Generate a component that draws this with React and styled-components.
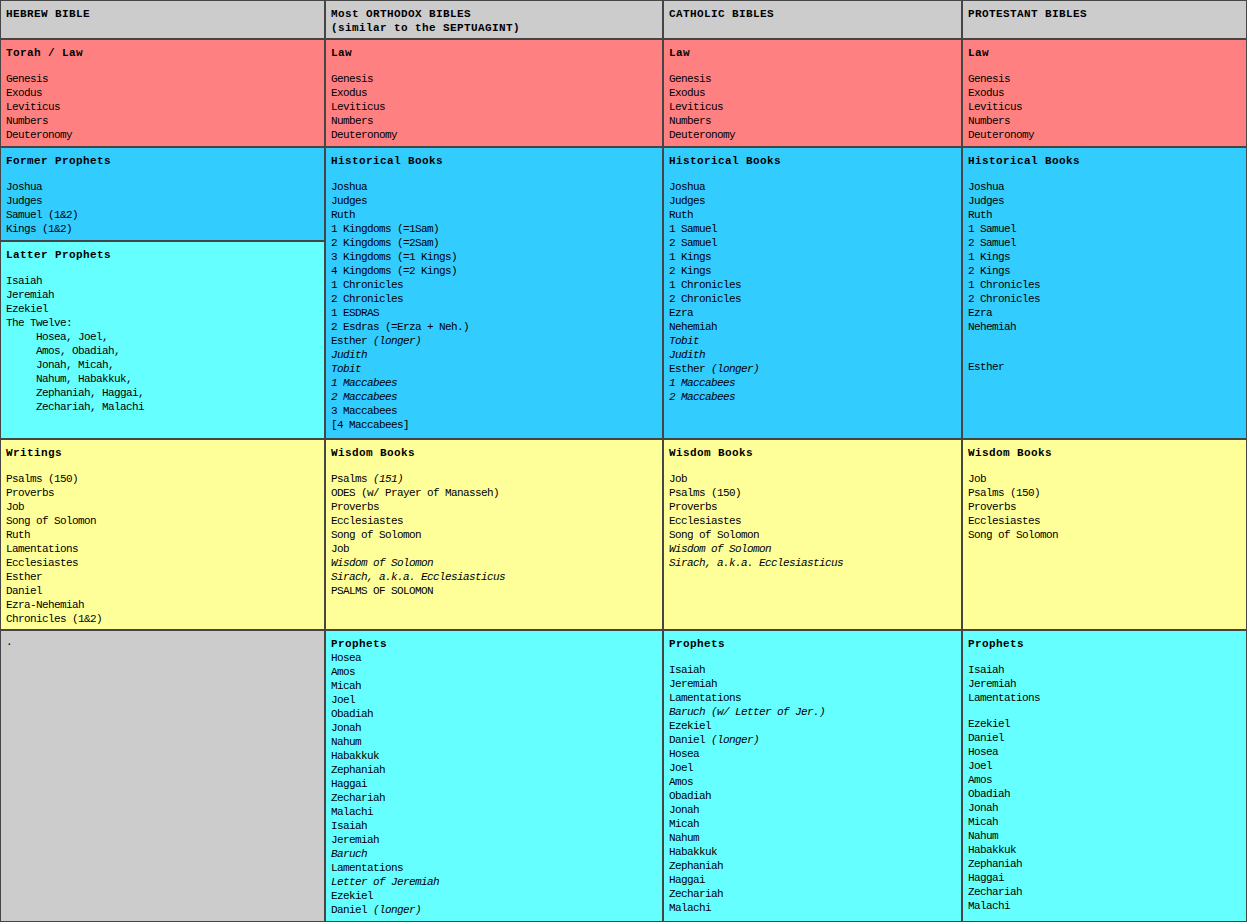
import React from 'react'
import styled, { createGlobalStyle } from 'styled-components'

const GlobalStyle = createGlobalStyle`
  html, body { margin: 0; padding: 0; background: #ffffff; }
  body { font-family: "Liberation Mono", "DejaVu Sans Mono", monospace; }
`

const GRAY = '#cccccc'
const RED = '#ff8080'
const BLUE = '#33ccff'
const CYAN = '#66ffff'
const YELLOW = '#ffff99'

const Grid = styled.div`
  display: grid;
  width: 1247px;
  grid-template-columns: 325px 338px 299px 285px;
  grid-template-rows: 39px 108px 94px 198px 191px 292px;
`

const Cell = styled.div`
  box-sizing: border-box;
  grid-row: ${(p) => p.$row};
  background: ${(p) => p.$bg};
  border: 1px solid #454545;
  padding: ${(p) => (p.$head ? '6px 5px 4px' : '4px 5px')};
  overflow: hidden;
  color: #000;
  font-size: 11px;
  line-height: 14px;
  letter-spacing: -0.6px;
  white-space: pre;
`

const HeadText = styled.div`
  font-weight: bold;
  letter-spacing: 0.4px;
`

const Heading = styled(HeadText)`
  padding-top: 2px;
`

const Line = styled.div`
  height: 14px;
  padding-left: ${(p) => (p.$indent ? '30px' : '0')};
`

const Blank = styled.div`
  height: ${(p) => p.$h || 14}px;
`

const Em = styled.i`
  font-style: italic;
`

// a line is a string, ['text', 'italic'] pair, {indent} or {blank: n}
const header = [
  ['HEBREW BIBLE'],
  ['Most ORTHODOX BIBLES', '(similar to the SEPTUAGINT)'],
  ['CATHOLIC BIBLES'],
  ['PROTESTANT BIBLES'],
]

const law = ['Genesis', 'Exodus', 'Leviticus', 'Numbers', 'Deuteronomy']

const lawCells = [
  { h: 'Torah / Law', gap: true, items: law },
  { h: 'Law', gap: true, items: law },
  { h: 'Law', gap: true, items: law },
  { h: 'Law', gap: true, items: law },
]

const histCells = [
  {
    row: '3',
    bg: BLUE,
    h: 'Former Prophets',
    gap: true,
    items: ['Joshua', 'Judges', 'Samuel (1&2)', 'Kings (1&2)'],
  },
  {
    row: '4',
    bg: CYAN,
    h: 'Latter Prophets',
    gap: true,
    items: [
      'Isaiah',
      'Jeremiah',
      'Ezekiel',
      'The Twelve:',
      { indent: 'Hosea, Joel,' },
      { indent: 'Amos, Obadiah,' },
      { indent: 'Jonah, Micah,' },
      { indent: 'Nahum, Habakkuk,' },
      { indent: 'Zephaniah, Haggai,' },
      { indent: 'Zechariah, Malachi' },
    ],
  },
  {
    row: '3 / 5',
    bg: BLUE,
    h: 'Historical Books',
    gap: true,
    items: [
      'Joshua',
      'Judges',
      'Ruth',
      '1 Kingdoms (=1Sam)',
      '2 Kingdoms (=2Sam)',
      '3 Kingdoms (=1 Kings)',
      '4 Kingdoms (=2 Kings)',
      '1 Chronicles',
      '2 Chronicles',
      '1 ESDRAS',
      '2 Esdras (=Erza + Neh.)',
      ['Esther ', '(longer)'],
      ['', 'Judith'],
      ['', 'Tobit'],
      ['', '1 Maccabees'],
      ['', '2 Maccabees'],
      '3 Maccabees',
      '[4 Maccabees]',
    ],
  },
  {
    row: '3 / 5',
    bg: BLUE,
    h: 'Historical Books',
    gap: true,
    items: [
      'Joshua',
      'Judges',
      'Ruth',
      '1 Samuel',
      '2 Samuel',
      '1 Kings',
      '2 Kings',
      '1 Chronicles',
      '2 Chronicles',
      'Ezra',
      'Nehemiah',
      ['', 'Tobit'],
      ['', 'Judith'],
      ['Esther ', '(longer)'],
      ['', '1 Maccabees'],
      ['', '2 Maccabees'],
    ],
  },
  {
    row: '3 / 5',
    bg: BLUE,
    h: 'Historical Books',
    gap: true,
    items: [
      'Joshua',
      'Judges',
      'Ruth',
      '1 Samuel',
      '2 Samuel',
      '1 Kings',
      '2 Kings',
      '1 Chronicles',
      '2 Chronicles',
      'Ezra',
      'Nehemiah',
      { blank: 14 },
      { blank: 12 },
      'Esther',
    ],
  },
]

const wisdomCells = [
  {
    h: 'Writings',
    gap: true,
    items: [
      'Psalms (150)',
      'Proverbs',
      'Job',
      'Song of Solomon',
      'Ruth',
      'Lamentations',
      'Ecclesiastes',
      'Esther',
      'Daniel',
      'Ezra-Nehemiah',
      'Chronicles (1&2)',
    ],
  },
  {
    h: 'Wisdom Books',
    gap: true,
    items: [
      ['Psalms ', '(151)'],
      'ODES (w/ Prayer of Manasseh)',
      'Proverbs',
      'Ecclesiastes',
      'Song of Solomon',
      'Job',
      ['', 'Wisdom of Solomon'],
      ['', 'Sirach, a.k.a. Ecclesiasticus'],
      'PSALMS OF SOLOMON',
    ],
  },
  {
    h: 'Wisdom Books',
    gap: true,
    items: [
      'Job',
      'Psalms (150)',
      'Proverbs',
      'Ecclesiastes',
      'Song of Solomon',
      ['', 'Wisdom of Solomon'],
      ['', 'Sirach, a.k.a. Ecclesiasticus'],
    ],
  },
  {
    h: 'Wisdom Books',
    gap: true,
    items: ['Job', 'Psalms (150)', 'Proverbs', 'Ecclesiastes', 'Song of Solomon'],
  },
]

const minor = [
  'Hosea',
  'Joel',
  'Amos',
  'Obadiah',
  'Jonah',
  'Micah',
  'Nahum',
  'Habakkuk',
  'Zephaniah',
  'Haggai',
  'Zechariah',
  'Malachi',
]

const prophetCells = [
  { bg: GRAY, items: ['.'] },
  {
    bg: CYAN,
    h: 'Prophets',
    items: [
      'Hosea',
      'Amos',
      'Micah',
      'Joel',
      'Obadiah',
      'Jonah',
      'Nahum',
      'Habakkuk',
      'Zephaniah',
      'Haggai',
      'Zechariah',
      'Malachi',
      'Isaiah',
      'Jeremiah',
      ['', 'Baruch'],
      'Lamentations',
      ['', 'Letter of Jeremiah'],
      'Ezekiel',
      ['Daniel ', '(longer)'],
    ],
  },
  {
    bg: CYAN,
    h: 'Prophets',
    gap: true,
    items: [
      'Isaiah',
      'Jeremiah',
      'Lamentations',
      ['', 'Baruch (w/ Letter of Jer.)'],
      'Ezekiel',
      ['Daniel ', '(longer)'],
      ...minor,
    ],
  },
  {
    bg: CYAN,
    h: 'Prophets',
    gap: true,
    items: ['Isaiah', 'Jeremiah', 'Lamentations', { blank: 12 }, 'Ezekiel', 'Daniel', ...minor],
  },
]

const renderItem = (it, i) => {
  if (typeof it === 'string') return <Line key={i}>{it}</Line>
  if (Array.isArray(it))
    return (
      <Line key={i}>
        {it[0]}
        <Em>{it[1]}</Em>
      </Line>
    )
  if (it.blank) return <Blank key={i} $h={it.blank} />
  return (
    <Line key={i} $indent>
      {it.indent}
    </Line>
  )
}

const Section = ({ row, bg, h, gap, items }) => (
  <Cell $row={row} $bg={bg}>
    {h && <Heading>{h}</Heading>}
    {gap && <Blank $h={12} />}
    {items.map(renderItem)}
  </Cell>
)

const App = () => {
  return (
    <>
      <GlobalStyle />
      <Grid>
        {header.map((lines, i) => (
          <Cell key={'h' + i} $row="1" $bg={GRAY} $head>
            {lines.map((l) => (
              <HeadText key={l}>{l}</HeadText>
            ))}
          </Cell>
        ))}
        {lawCells.map((c, i) => (
          <Section key={'l' + i} row="2" bg={RED} {...c} />
        ))}
        {histCells.map((c, i) => (
          <Section key={'t' + i} {...c} />
        ))}
        {wisdomCells.map((c, i) => (
          <Section key={'w' + i} row="5" bg={YELLOW} {...c} />
        ))}
        {prophetCells.map((c, i) => (
          <Section key={'p' + i} row="6" {...c} />
        ))}
      </Grid>
    </>
  )
}

export default App
